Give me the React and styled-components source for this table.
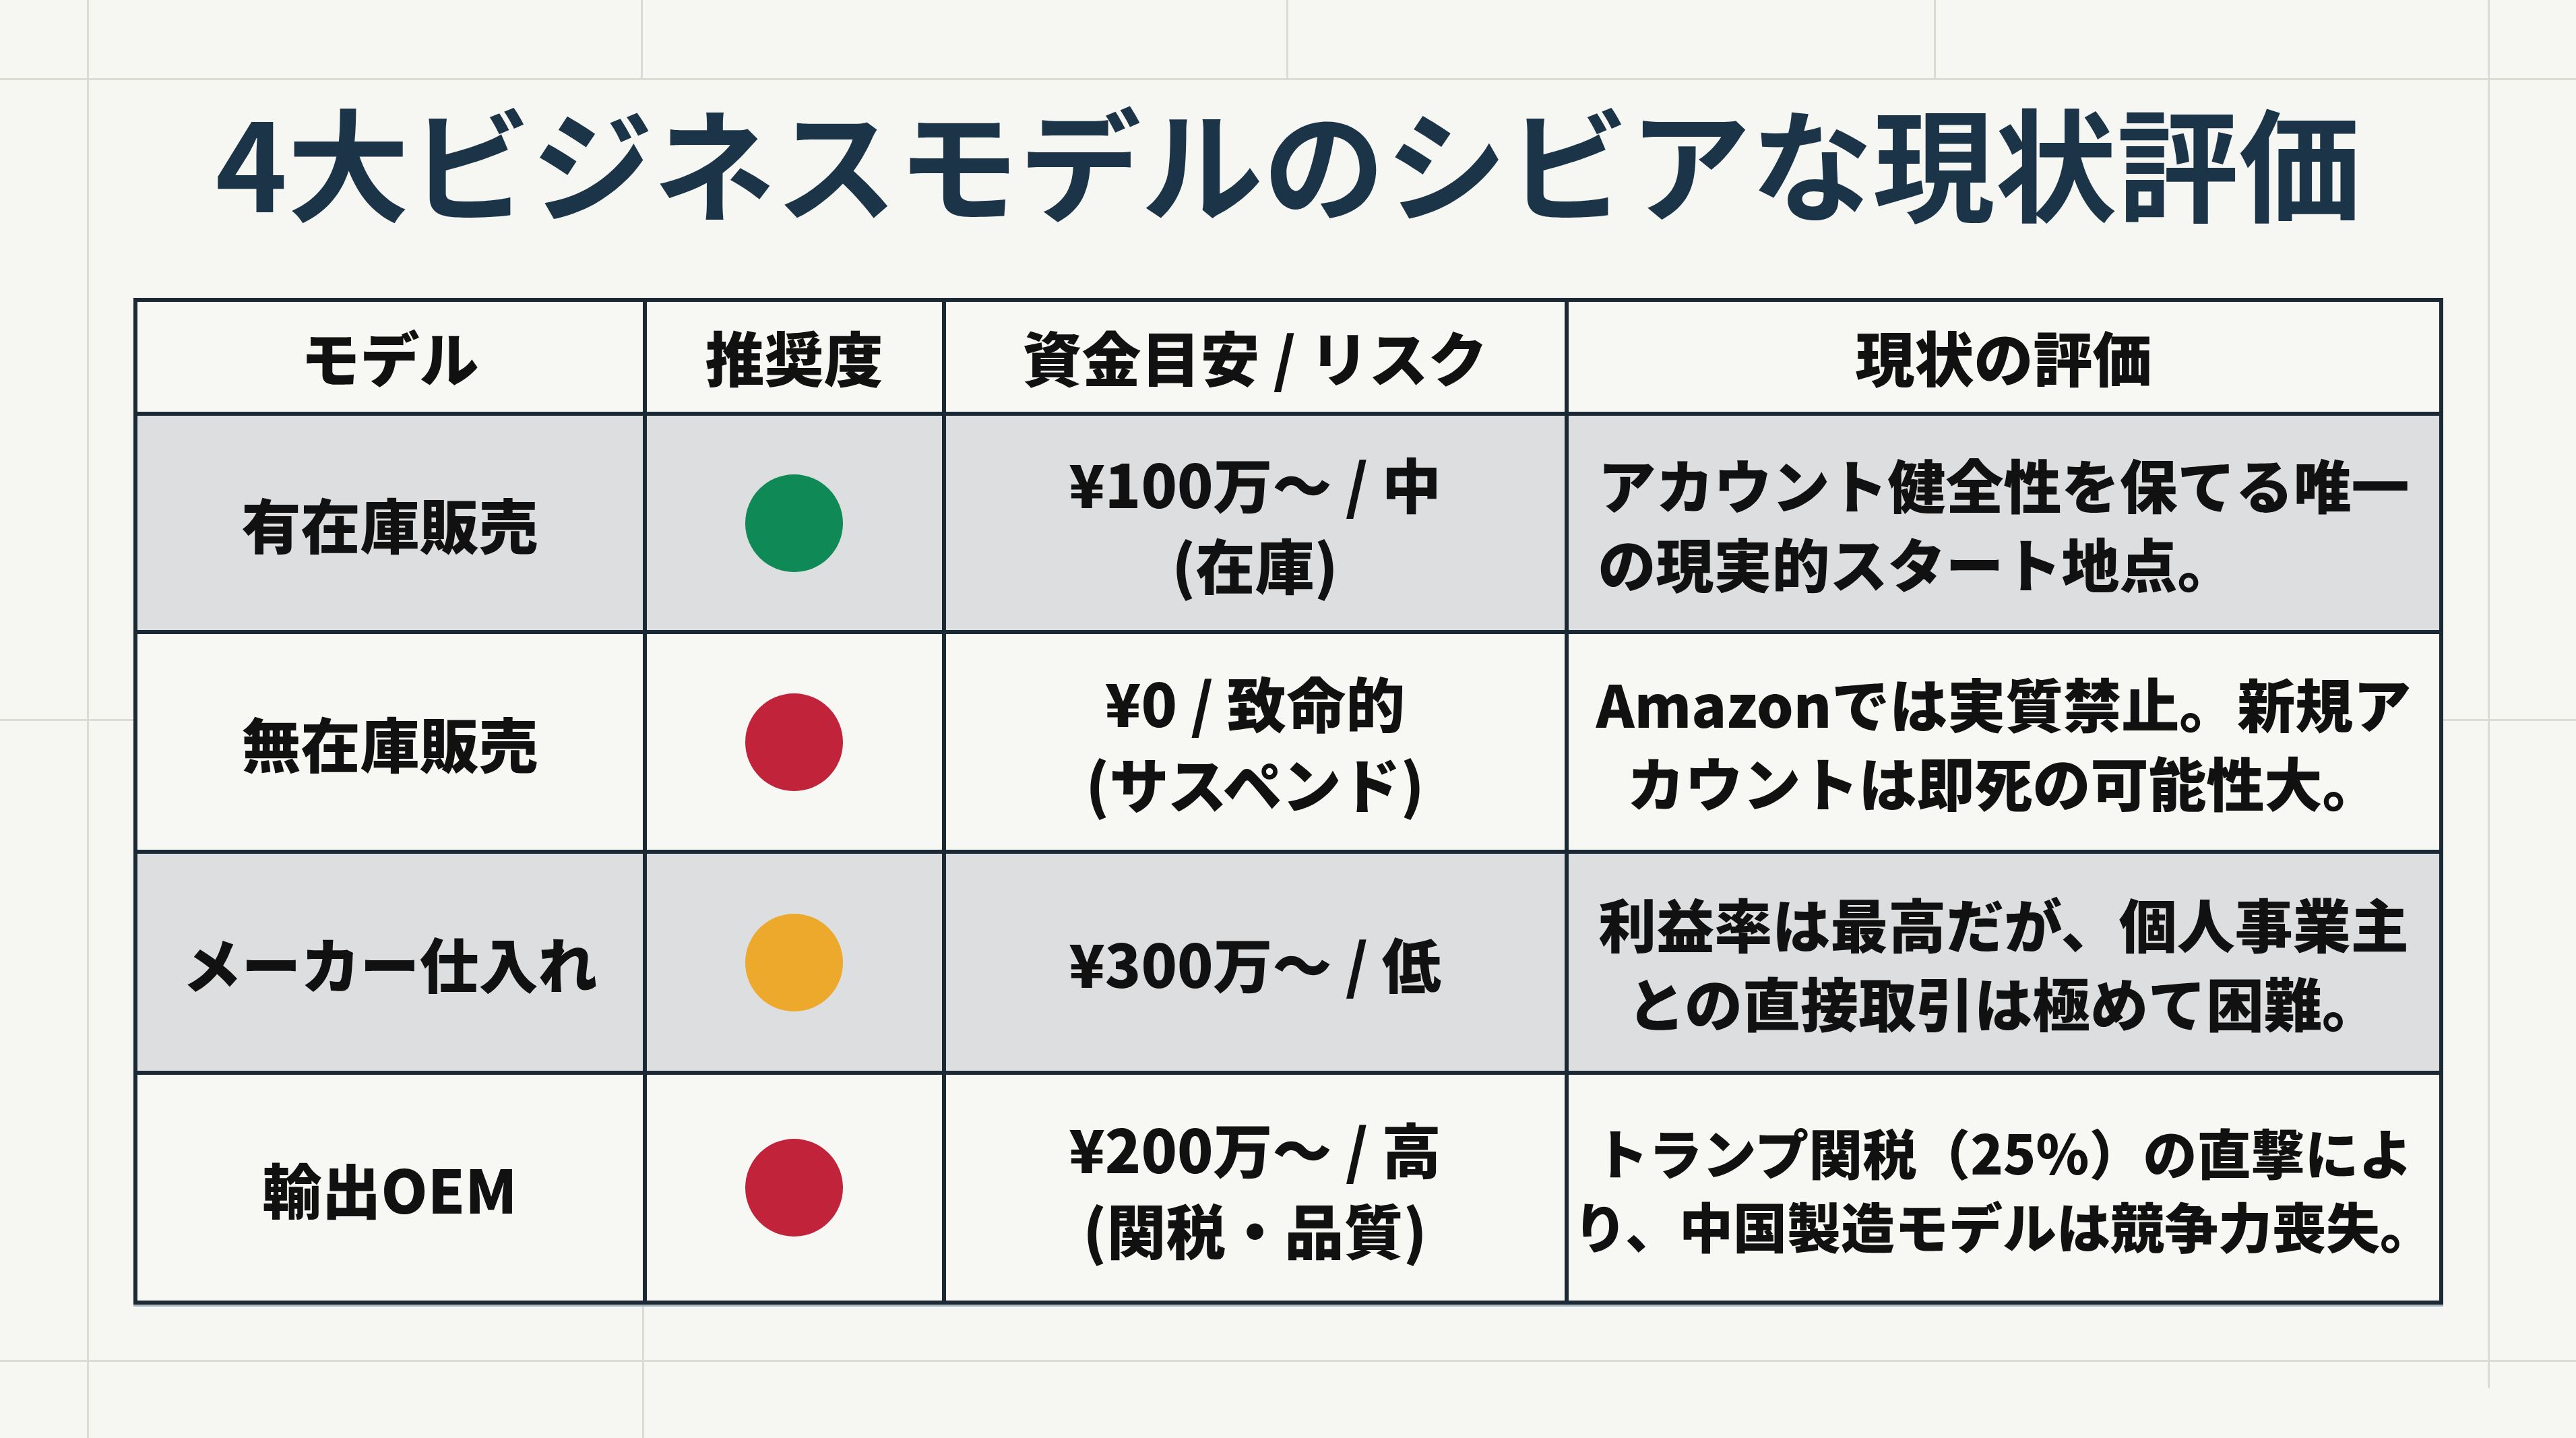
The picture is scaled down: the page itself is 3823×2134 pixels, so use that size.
import React from "react";
import styled, { createGlobalStyle } from "styled-components";

const GlobalStyle = createGlobalStyle`
  html, body {
    margin: 0;
    padding: 0;
    background: #f6f6f2;
  }
`;

const line = "#dcdcd6";

const Page = styled.main`
  box-sizing: border-box;
  width: 3823px;
  height: 2134px;
  display: flex;
  flex-direction: column;
  align-items: center;
  padding-top: 126px;
  font-family: "Noto Sans CJK JP", "Noto Sans", sans-serif;
  background:
    linear-gradient(${line}, ${line}) 0 116px / 100% 3px no-repeat,
    linear-gradient(${line}, ${line}) 0 1067px / 100% 3px no-repeat,
    linear-gradient(${line}, ${line}) 0 2018px / 100% 3px no-repeat,
    linear-gradient(${line}, ${line}) 129px 0 / 3px 100% no-repeat,
    linear-gradient(${line}, ${line}) 3692px 0 / 3px 2060px no-repeat,
    linear-gradient(${line}, ${line}) 951px 0 / 3px 117px no-repeat,
    linear-gradient(${line}, ${line}) 1909px 0 / 3px 117px no-repeat,
    linear-gradient(${line}, ${line}) 2870px 0 / 3px 117px no-repeat,
    linear-gradient(${line}, ${line}) 953px 1933px / 3px 201px no-repeat,
    #f6f6f2;
`;

const Title = styled.h1`
  margin: 0;
  font-size: 181px;
  line-height: 220px;
  font-weight: 700;
  color: #1c3447;
  white-space: nowrap;
`;

const Grid = styled.div`
  margin-top: 96px;
  display: grid;
  grid-template-columns: 750px 438px 918px 1292px;
  grid-template-rows: 163px 318px 320px 322px 335px;
  gap: 6px;
  padding: 6px;
  background: #1b2934;
  box-shadow: 0 3px 0 #a9b6bf;
`;

const Cell = styled.div`
  display: flex;
  align-items: center;
  justify-content: center;
  background: ${(p) => (p.$shade ? "#dcdedf" : "#f7f7f4")};
  color: #111;
  font-weight: 900;
  font-size: ${(p) => p.$size || 88}px;
  line-height: ${(p) => Math.round((p.$size || 88) * 1.36)}px;
  text-align: ${(p) => p.$align || "center"};
  white-space: nowrap;
`;

const HeadCell = styled(Cell)`
  background: #f7f7f4;
  padding-bottom: 4px;
`;

const Lines = styled.span`
  display: block;
`;

const Dot = styled.span`
  width: 145px;
  height: 145px;
  border-radius: 50%;
  background: ${(p) => p.$color};
`;

const headers = ["モデル", "推奨度", "資金目安 / リスク", "現状の評価"];

const rows = [
  {
    model: "有在庫販売",
    dot: "#0f8a57",
    cost: ["¥100万～ / 中", "(在庫)"],
    note: ["アカウント健全性を保てる唯一", "の現実的スタート地点。"],
    align: "left",
  },
  {
    model: "無在庫販売",
    dot: "#c1233a",
    cost: ["¥0 / 致命的", "(サスペンド)"],
    note: ["Amazonでは実質禁止。新規ア", "カウントは即死の可能性大。"],
  },
  {
    model: "メーカー仕入れ",
    dot: "#eca92b",
    cost: ["¥300万～ / 低"],
    note: ["利益率は最高だが、個人事業主", "との直接取引は極めて困難。"],
  },
  {
    model: "輸出OEM",
    dot: "#c1233a",
    cost: ["¥200万～ / 高", "(関税・品質)"],
    note: ["トランプ関税（25%）の直撃によ", "り、中国製造モデルは競争力喪失。"],
    size: 80,
  },
];

const Multi = ({ lines }) => (
  <Lines>
    {lines.map((l, i) => (
      <React.Fragment key={i}>
        {i > 0 && <br />}
        {l}
      </React.Fragment>
    ))}
  </Lines>
);

export default function App() {
  return (
    <>
      <GlobalStyle />
      <Page>
        <Title>4大ビジネスモデルのシビアな現状評価</Title>
        <Grid>
          {headers.map((h) => (
            <HeadCell key={h}>{h}</HeadCell>
          ))}
          {rows.map((r, i) => {
            const shade = i % 2 === 0;
            return (
              <React.Fragment key={r.model}>
                <Cell $shade={shade}>{r.model}</Cell>
                <Cell $shade={shade}>
                  <Dot $color={r.dot} />
                </Cell>
                <Cell $shade={shade}>
                  <Multi lines={r.cost} />
                </Cell>
                <Cell $shade={shade} $align={r.align} $size={r.size || 86}>
                  <Multi lines={r.note} />
                </Cell>
              </React.Fragment>
            );
          })}
        </Grid>
      </Page>
    </>
  );
}
